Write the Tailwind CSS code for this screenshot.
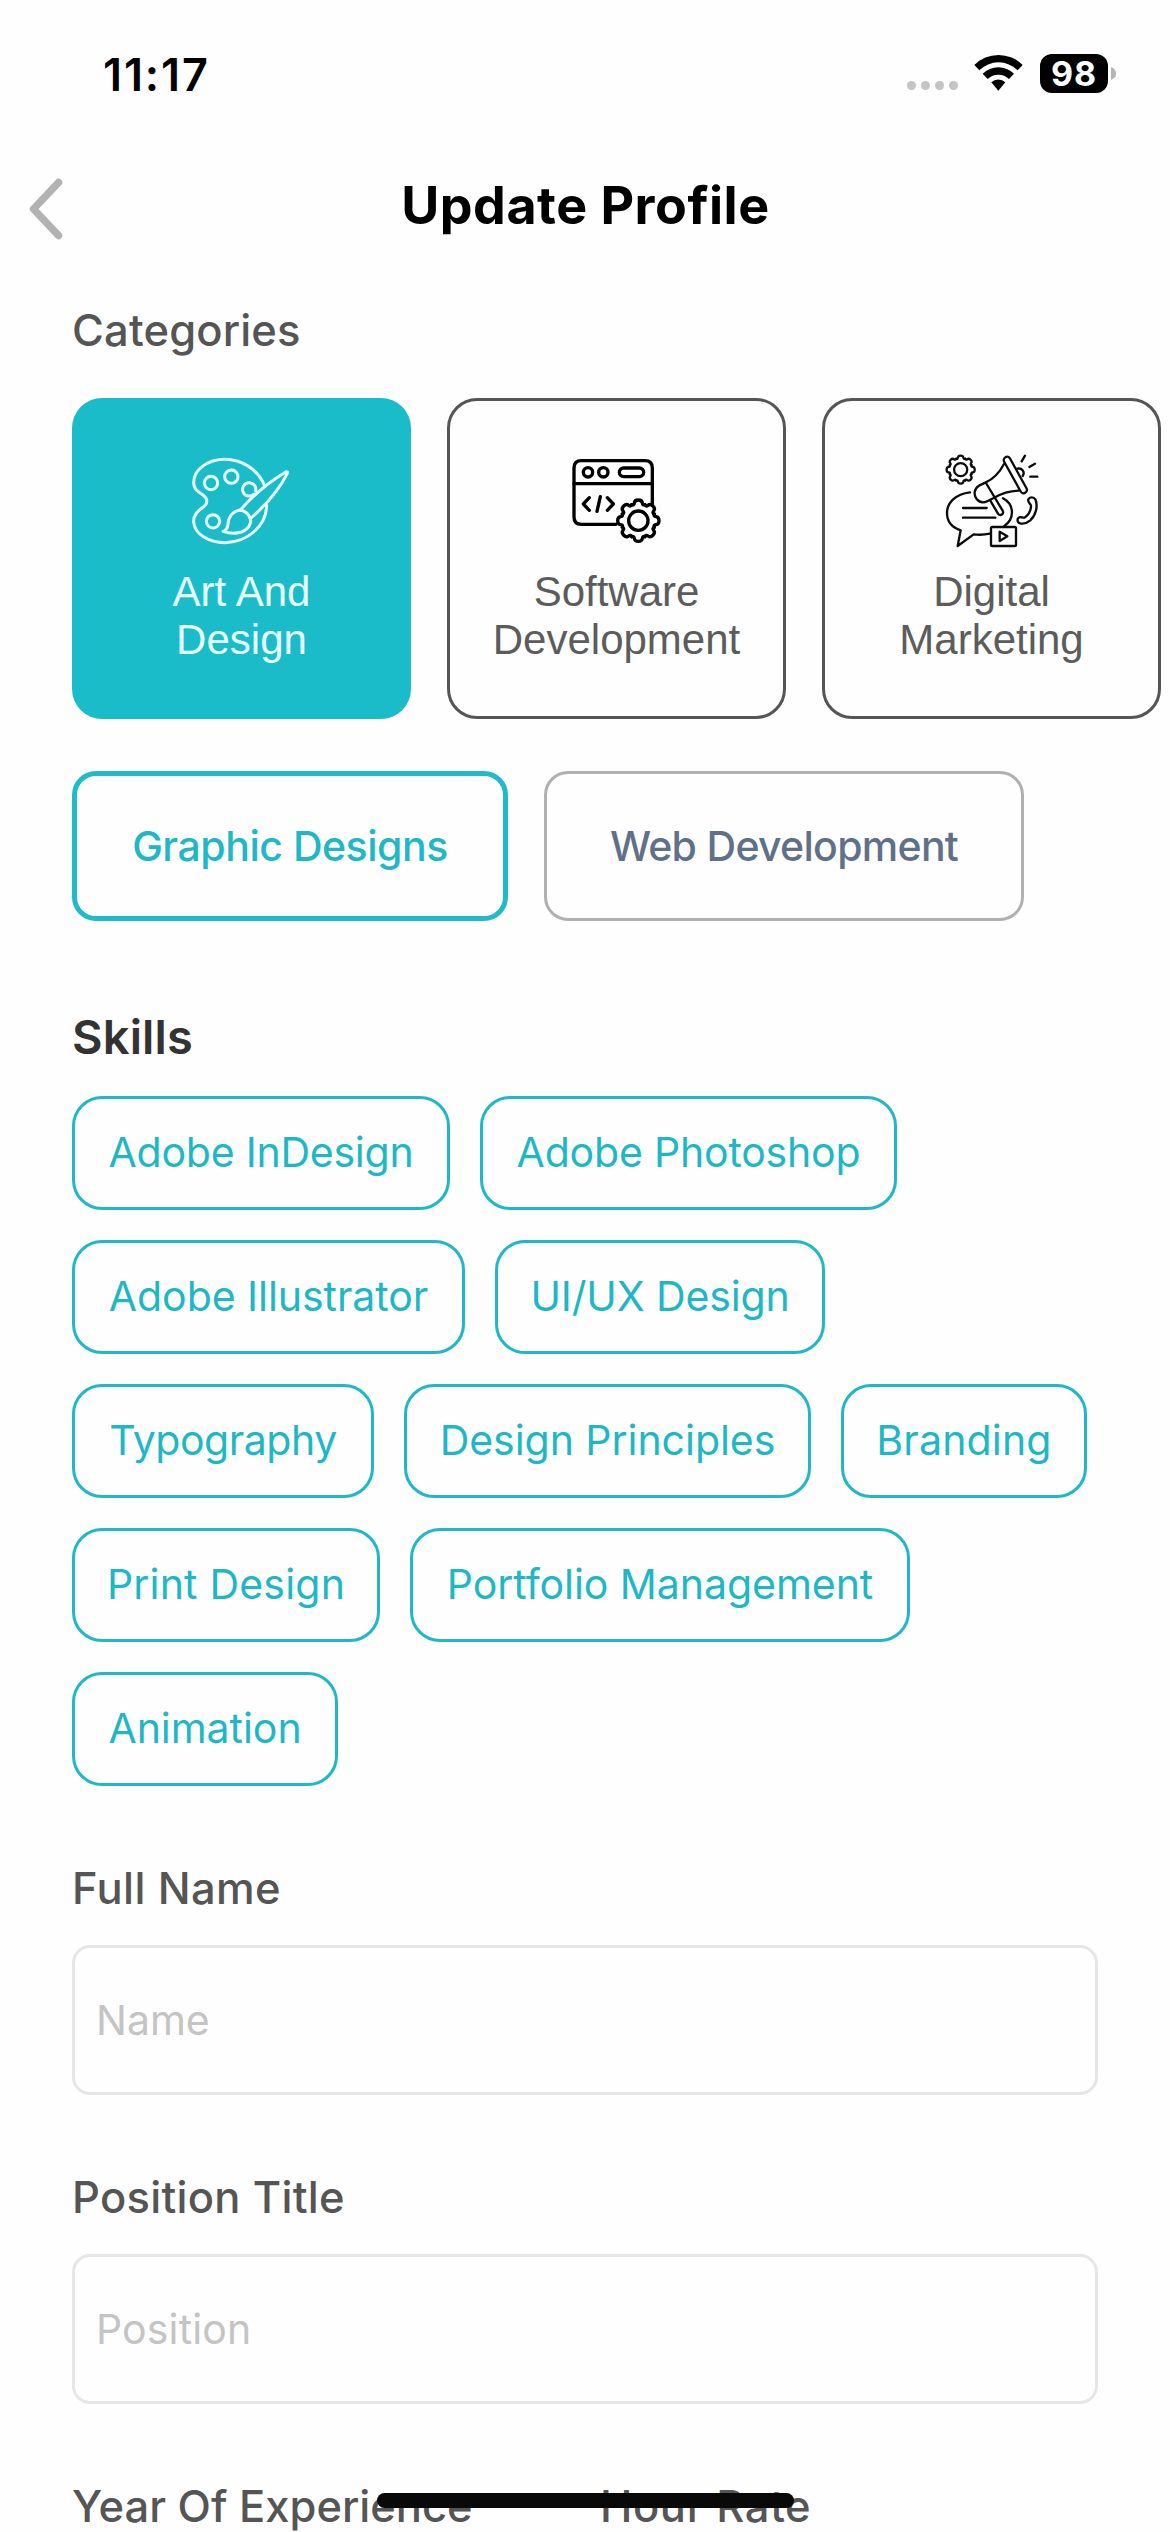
<!DOCTYPE html>
<html lang="en">
<head>
<meta charset="utf-8">
<title>Update Profile</title>
<script src="https://cdn.jsdelivr.net/npm/@tailwindcss/browser@4"></script>
</head>
<body class="bg-[#fefefe] font-['Inter',sans-serif]">
<svg class="hidden">
  <defs>
    <g id="gear-ring">
      <path id="tooth" d="M-20-48Q-13-45-12-53Q-11-62 0-62Q11-62 12-53Q13-45 20-48"/>
      <use href="#tooth" transform="rotate(45)"/>
      <use href="#tooth" transform="rotate(90)"/>
      <use href="#tooth" transform="rotate(135)"/>
      <use href="#tooth" transform="rotate(180)"/>
      <use href="#tooth" transform="rotate(225)"/>
      <use href="#tooth" transform="rotate(270)"/>
      <use href="#tooth" transform="rotate(315)"/>
      <circle r="29"/>
    </g>
  </defs>
</svg>

<div class="relative w-[1170px] h-[2532px] overflow-hidden flex flex-col">
  <!-- Status bar -->
  <div class="h-[141px] shrink-0 flex justify-between items-start pl-[103px] pr-[54px]">
    <span class="mt-[48px] h-[54px] leading-[54px] text-[45px] font-semibold tracking-[1.9px] text-black">11:17</span>
    <div class="flex mt-[54px]">
      <div class="flex gap-[5px] mt-[27px]">
        <i class="size-[9px] rounded-full bg-[#c4c4c4]"></i>
        <i class="size-[9px] rounded-full bg-[#c4c4c4]"></i>
        <i class="size-[9px] rounded-full bg-[#c4c4c4]"></i>
        <i class="size-[9px] rounded-full bg-[#c4c4c4]"></i>
      </div>
      <svg class="ml-[16px] w-[49px] h-[37px]" viewBox="284 74 147 111">
        <path d="M285 107A102 102 0 0 1 430 107L415 123A81 81 0 0 0 300 123Z"/>
        <path d="M310 133A67 67 0 0 1 404 133L389 149A46 46 0 0 0 325 149Z"/>
        <path d="M336 159A31 31 0 0 1 378 159L357 184Z"/>
      </svg>
      <div class="ml-[17px] w-[68px] h-[39px] rounded-[12px] bg-black text-white text-[34px] font-bold leading-[39px] text-center tracking-[0.8px]">98</div>
      <svg class="ml-[3px] mt-[13px] w-[5px] h-[13px]" viewBox="0 0 5 13"><path d="M0 0Q5 2 5 6.500Q5 11 0 13Z" fill="#b5b5b5"/></svg>
    </div>
  </div>

  <!-- Header -->
  <div class="h-[130px] shrink-0 flex items-center justify-center relative">
    <svg class="absolute left-[29px] top-[37px] w-[34px] h-[62px]" viewBox="0 0 34 62" fill="none" stroke="#b2b2b2" stroke-width="7.500" stroke-linecap="round" stroke-linejoin="round"><path d="M29.500 4.500L4.500 31L29.500 57.500"/></svg>
    <h1 class="pl-[1px] text-[52px] leading-[62px] font-bold tracking-[0.5px] text-black">Update Profile</h1>
  </div>

  <div class="pl-[72px] flex flex-col">
    <h2 class="mt-[32px] h-[54px] leading-[54px] text-[43.5px] font-medium tracking-[0.15px] text-[#555]">Categories</h2>

    <div class="mt-[41px] flex gap-[36px]">
      <div class="w-[339px] h-[321px] shrink-0 rounded-[30px] bg-[#1bbcca] flex flex-col items-center pt-[58px]">
        <svg class="w-[101px] h-[90px]" viewBox="395 198 303 270" fill="none" stroke="#e6feff" stroke-width="9" stroke-linecap="round" stroke-linejoin="round">
          <path d="M617 290C596 236 545 207 493 208C442 210 404 240 403 276C403 297 415 305 431 315C447 327 445 341 432 351C414 364 402 375 403 396C406 434 450 457 497 458C566 456 621 408 622 346"/>
          <circle cx="455" cy="279" r="20"/><circle cx="516" cy="260" r="20"/><circle cx="461" cy="394" r="20"/>
          <path d="M584 312A20 20 0 1 1 589 303"/>
          <path d="M543 360Q600 294 679 246Q686 243 684 250Q650 318 573 386"/>
          <path d="M543 360Q566 365 573 386"/>
          <path d="M543 360C519 363 507 382 506 403Q504 420 491 424C522 435 556 430 570 407Q576 395 573 386"/>
        </svg>
        <p class="mt-[22px] text-center font-['Liberation_Sans',sans-serif] text-[42px] leading-[48px] text-[#e6feff]">Art And<br>Design</p>
      </div>

      <div class="w-[339px] h-[321px] shrink-0 rounded-[30px] border-[3px] border-[#555] flex flex-col items-center pt-[55px]">
        <svg class="w-[90px] h-[90px]" viewBox="427 198 270 270" fill="none" stroke="#000" stroke-width="10" stroke-linecap="round" stroke-linejoin="round">
          <path d="M559 403H455Q433 403 433 381V234Q433 212 455 212H646Q668 212 668 234V342"/>
          <path d="M433 281H668"/>
          <circle cx="475" cy="247" r="14"/><circle cx="521" cy="247" r="14"/>
          <rect x="569" y="234" width="73" height="26" rx="13"/>
          <path d="M479 323L461 342L479 361M512 320L502 364M533 323L551 342L533 361"/>
          <use href="#gear-ring" transform="translate(626 392)"/>
        </svg>
        <p class="mt-[22px] text-center font-['Liberation_Sans',sans-serif] text-[42px] leading-[48px] text-[#5c5c5c]">Software<br>Development</p>
      </div>

      <div class="w-[339px] h-[321px] shrink-0 rounded-[30px] border-[3px] border-[#555] flex flex-col items-center pt-[52px]">
        <svg class="w-[96px] h-[96px]" viewBox="431 189 288 288" fill="none" stroke="#0c0c0c" stroke-width="7" stroke-linecap="round" stroke-linejoin="round">
          <use href="#gear-ring" transform="translate(481 239) scale(.68)" stroke-width="10"/>
          <!-- speech bubble -->
          <path d="M509 307C466 312 440 338 440 369C440 395 457 413 481 421L472 468L520 433Q545 436 568 431"/>
          <path d="M608 325C642 343 644 386 612 408"/>
          <path d="M488 354H559M488 383H585"/>
          <!-- megaphone -->
          <rect x="-10" y="-61" width="20" height="122" rx="10" transform="translate(645 255) rotate(-29)"/>
          <path d="M611 222Q590 262 555 278L536 287C521 296 519 314 529 327C538 338 551 339 562 333L580 324Q617 303 655 302"/>
          <path d="M557 279L607 362Q611 370 604 374Q598 377 593 371L570 332"/>
          <path d="M651 236C665 233 675 246 667 258"/>
          <path d="M664 214L674 197M687 231L704 221M690 260H711"/>
          <!-- handset -->
          <path d="M684 328C688 320 700 320 705 328C714 348 706 377 690 391C680 399 670 403 659 400C650 398 649 385 657 382C664 379 668 386 674 382C686 373 692 359 692 347C691 341 681 338 684 328Z"/>
          <!-- video -->
          <rect x="572" y="411" width="75" height="57" rx="4"/>
          <path d="M598 425V453L621 439Z"/>
        </svg>
        <p class="mt-[19px] text-center font-['Liberation_Sans',sans-serif] text-[42px] leading-[48px] text-[#5c5c5c]">Digital<br>Marketing</p>
      </div>
    </div>

    <div class="mt-[52px] flex gap-[36px]">
      <div class="w-[436px] h-[150px] rounded-[24px] border-[5px] border-[#20bac8] flex items-center justify-center pt-[2px] text-[41px] font-medium tracking-[-0.48px] text-[#20b7c6]">Graphic Designs</div>
      <div class="w-[480px] h-[150px] rounded-[24px] border-[3px] border-[#b0b0b0] flex items-center justify-center pt-[2px] text-[41px] font-medium tracking-[-0.7px] text-[#5f7189]">Web Development</div>
    </div>

    <h2 class="mt-[87px] h-[58px] leading-[58px] text-[47px] font-semibold tracking-[0.15px] text-[#333]">Skills</h2>

    <div class="mt-[30px] flex flex-col gap-[30px] text-[41px] text-[#1eb7c6] [&_span]:h-[114px] [&_span]:rounded-[30px] [&_span]:border-[3px] [&_span]:border-[#20b8c6] [&_span]:flex [&_span]:items-center [&_span]:justify-center">
      <div class="flex gap-[30px]"><span class="w-[378px] tracking-[-0.23px]">Adobe InDesign</span><span class="w-[417px] tracking-[-0.19px]">Adobe Photoshop</span></div>
      <div class="flex gap-[30px]"><span class="w-[393px] tracking-[-0.05px]">Adobe Illustrator</span><span class="w-[330px] tracking-[-0.14px]">UI/UX Design</span></div>
      <div class="flex gap-[30px]"><span class="w-[302px] tracking-[-0.44px]">Typography</span><span class="w-[407px] tracking-[-0.04px]">Design Principles</span><span class="w-[246px] tracking-[0.18px]">Branding</span></div>
      <div class="flex gap-[30px]"><span class="w-[308px] tracking-[0.2px]">Print Design</span><span class="w-[500px] tracking-[-0.05px]">Portfolio Management</span></div>
      <div class="flex gap-[30px]"><span class="w-[266px] tracking-[-0.04px]">Animation</span></div>
    </div>

    <label class="mt-[75px] h-[54px] leading-[54px] text-[43.5px] font-medium tracking-[0.36px] text-[#555]">Full Name</label>
    <div class="mt-[30px] w-[1026px] h-[150px] rounded-[18px] border-[3px] border-[#e6e6e6] flex items-center pt-[1px] pl-[21px] text-[41px] text-[#c4c4c4]">Name</div>

    <label class="mt-[75px] h-[54px] leading-[54px] text-[43.5px] font-medium tracking-[0.29px] text-[#555]">Position Title</label>
    <div class="mt-[30px] w-[1026px] h-[150px] rounded-[18px] border-[3px] border-[#e6e6e6] flex items-center pt-[1px] pl-[21px] text-[41px] tracking-[0.14px] text-[#c4c4c4]">Position</div>

    <div class="mt-[75px] flex h-[54px] leading-[54px] text-[43.5px] font-medium text-[#555]">
      <label class="w-[528px]">Year Of Experience</label>
      <label class="tracking-[0.6px]">Hour Rate</label>
    </div>
  </div>

  <!-- Home indicator -->
  <div class="absolute left-[377px] top-[2493px] w-[417px] h-[15px] rounded-full bg-[#090909]"></div>
</div>
</body>
</html>
